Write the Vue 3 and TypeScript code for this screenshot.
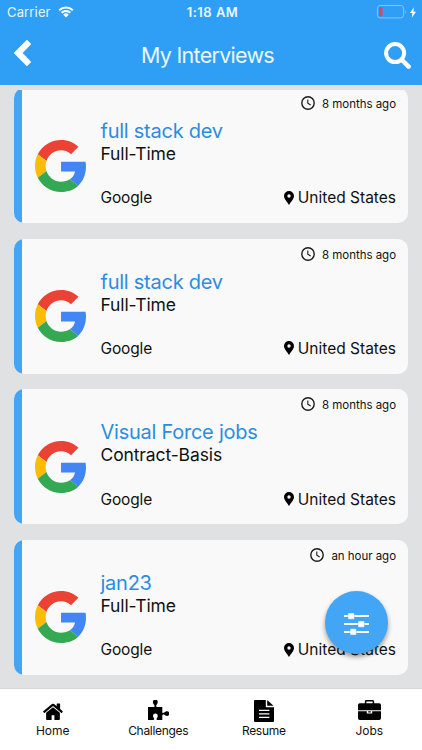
<script setup lang="ts">
interface Interview {
  id: number
  title: string
  type: string
  company: string
  location: string
  ago: string
}

const interviews: Interview[] = [
  { id: 1, title: 'full stack dev', type: 'Full-Time', company: 'Google', location: 'United States', ago: '8 months ago' },
  { id: 2, title: 'full stack dev', type: 'Full-Time', company: 'Google', location: 'United States', ago: '8 months ago' },
  { id: 3, title: 'Visual Force jobs', type: 'Contract-Basis', company: 'Google', location: 'United States', ago: '8 months ago' },
  { id: 4, title: 'jan23', type: 'Full-Time', company: 'Google', location: 'United States', ago: 'an hour ago' },
]
</script>

<template>
  <div class="screen">
    <header class="header">
      <div class="status">
        <div class="carrier">
          <span class="carrier-name">Carrier</span>
          <svg class="wifi" viewBox="0 0 16 12">
            <path d="M1.2 4.2A9.8 9.8 0 0 1 14.8 4.2M3.6 6.7A6.3 6.3 0 0 1 12.4 6.7" fill="none" stroke="#fff" stroke-width="2" />
            <path d="M8 11.6 5.2 8.7a4 4 0 0 1 5.6 0z" fill="#fff" />
          </svg>
        </div>
        <span class="time">1:18 AM</span>
        <div class="power">
          <svg class="battery" viewBox="0 0 30 14">
            <rect x=".5" y=".5" width="26" height="12.4" rx="2.6" fill="none" stroke="#84c6fb" />
            <rect x="2" y="2.2" width="3.6" height="9" rx=".8" fill="#c4506f" />
            <path d="M28 4.6q1.6 2 0 4.4z" fill="#84c6fb" />
          </svg>
          <svg class="bolt" viewBox="0 0 7 12"><path d="M4.5 0 0 6.6h2.8L2 12l5-7H4z" fill="#fff" /></svg>
        </div>
      </div>
      <div class="nav">
        <svg class="back" viewBox="0 0 17 26"><path d="M12.9 0 17 4.1 8.3 13l8.700 8.900-4.100 4.100L0 13z" fill="#fff" stroke="#fff" stroke-width=".6" /></svg>
        <h1 class="heading">My Interviews</h1>
        <svg class="search" viewBox="0 0 27 27">
          <circle cx="11.1" cy="11.1" r="9" fill="none" stroke="#fff" stroke-width="4" />
          <path d="m18 18 6.6 6.6" stroke="#fff" stroke-width="4.5" stroke-linecap="round" />
        </svg>
      </div>
    </header>

    <main class="list">
      <article v-for="item in interviews" :key="item.id" class="card">
        <div class="accent"></div>
        <div class="logo">
          <svg viewBox="0 0 47 48" preserveAspectRatio="none">
            <path fill="#ea4335" d="M24 9.5c3.54 0 6.71 1.22 9.21 3.6l6.85-6.85C35.9 2.38 30.47 0 24 0 14.62 0 6.51 5.38 2.56 13.22l7.98 6.19C12.43 13.72 17.74 9.5 24 9.5z" />
            <path fill="#4285f4" d="M46.98 24.55c0-1.57-.15-3.09-.38-4.55H24v9.02h12.94c-.58 2.96-2.26 5.48-4.78 7.18l7.73 6c4.51-4.18 7.09-10.36 7.09-17.65z" />
            <path fill="#fbbc05" d="M10.53 28.59c-.48-1.45-.76-2.99-.76-4.59s.27-3.14.76-4.59l-7.98-6.19C.92 16.46 0 20.12 0 24c0 3.88.92 7.54 2.56 10.78l7.97-6.19z" />
            <path fill="#34a853" d="M24 48c6.48 0 11.93-2.13 15.89-5.81l-7.73-6c-2.15 1.45-4.92 2.3-8.16 2.3-6.26 0-11.57-4.22-13.47-9.91l-7.98 6.19C6.51 42.62 14.62 48 24 48z" />
          </svg>
        </div>
        <div class="body">
          <div class="ago">
            <svg class="clock" viewBox="0 0 14 14" fill="none" stroke="#1b1b1b" stroke-width="1.4">
              <circle cx="7" cy="7" r="6.2" />
              <path d="M6.8 3.4v3.9l2.9 1.7" stroke-width="1.1" />
            </svg>
            <span>{{ item.ago }}</span>
          </div>
          <div class="title">{{ item.title }}</div>
          <div class="type">{{ item.type }}</div>
          <div class="foot">
            <span class="company">{{ item.company }}</span>
            <span class="place">
              <svg class="pin" viewBox="0 0 10 14"><path fill-rule="evenodd" d="M5 0a5 5 0 0 1 5 5c0 3.200-3.400 6-5 9C3.400 11 0 8.200 0 5a5 5 0 0 1 5-5zm0 3.300a1.700 1.700 0 1 0 0 3.400 1.700 1.700 0 0 0 0-3.400z" /></svg>
              <span>{{ item.location }}</span>
            </span>
          </div>
        </div>
      </article>
    </main>

    <footer class="tabs">
      <div class="tab">
        <svg class="icon home" viewBox="150 250 1492 1290" preserveAspectRatio="none"><path d="M1408 992v480q0 26-19 45t-45 19h-344v-354h-208v354h-344q-26 0-45-19t-19-45v-480q0-1 .5-3t.5-3l511-420 511 420q1 2 1 6zm223-69l-62 74q-8 9-21 11h-3q-13 0-21-7l-628-520-628 520q-12 8-24 7-13-2-21-11l-62-74q-8-10-7-23.500t11-21.500l655-545q32-26 76-26t76 26l200 166v-171q0-14 9-23t23-9h192q14 0 23 9t9 23v384l175 146q10 8 11 21.500t-7 23.500z" /></svg>
        <span>Home</span>
      </div>
      <div class="tab">
        <svg class="icon puzzle" viewBox="0 0 21 20"><path d="M0 7h5.800c1.200 0 .9-1.100.4-2C5.600 4 4.700 3.300 4.900 2A2.400 2.400 0 0 1 9.700 2c.2 1.300-.7 2-1.200 3-.5.900-.5 2 .6 2H14.300v5c0 1.300 1.200 1 2 .5.800-.6 1.500-1.200 2.700-1.200a2.300 2.300 0 0 1 0 4.600c-1.200 0-1.900-.8-2.700-1.200-1-.5-2-.2-2 1V20H9.300c-.9 0-.9-1-.5-1.700.5-1 1-1.400 1-2.300a2.400 2.400 0 0 0-4.800 0c0 .9.500 1.300 1 2.300.4.800.2 1.700-.8 1.700H0z" /></svg>
        <span class="narrow">Challenges</span>
      </div>
      <div class="tab">
        <svg class="icon file" viewBox="0 0 20 22">
          <path d="M1 0h10.800v7.200H20V21a1 1 0 0 1-1 1H1a1 1 0 0 1-1-1V1a1 1 0 0 1 1-1zM13.200 0 19.500 5.800H13.200z" />
          <path d="M5 10.300h10.400M5 13.800h10.400M5 17.300h10.400" stroke="#fff" stroke-width="1.300" />
        </svg>
        <span class="narrow">Resume</span>
      </div>
      <div class="tab">
        <svg class="icon case" viewBox="0 0 23 20">
          <path d="M7.600 4V1.500a.7.700 0 0 1 .7-.7h6.400a.7.700 0 0 1 .7.700V4" fill="none" stroke="#000" stroke-width="1.500" />
          <path d="M1.800 3.300h19.400A1.800 1.800 0 0 1 23 5.100v5.200H0V5.100a1.800 1.800 0 0 1 1.800-1.800zM0 11.300h8.800v2.200h5.400v-2.200H23v6.900a1.800 1.800 0 0 1-1.800 1.800H1.800A1.800 1.800 0 0 1 0 18.200zM10.200 11.300h2.600v1.100h-2.600z" />
        </svg>
        <span>Jobs</span>
      </div>
    </footer>

    <button class="fab" aria-label="Filter">
      <svg viewBox="0 0 25 22">
        <path d="M0 3h25M0 11h25M0 19h25" stroke="#fff" stroke-width="2" />
        <g fill="#fff" stroke="#42a5f5" stroke-width=".4">
          <rect x="4" y="0" width="6.400" height="6.200" rx="1" />
          <rect x="14" y="8" width="6.400" height="6.200" rx="1" />
          <rect x="6" y="15.800" width="6.400" height="6.200" rx="1" />
        </g>
      </svg>
    </button>
  </div>
</template>

<style>
body {
  margin: 0;
}
</style>

<style scoped>
.screen {
  position: relative;
  display: flex;
  flex-direction: column;
  width: 422px;
  height: 750px;
  overflow: hidden;
  background: #dfe1e3;
  color: #111;
  font-family: Inter, 'Liberation Sans', sans-serif;
}
svg {
  display: block;
  flex: none;
}
.header {
  flex: none;
  height: 84.5px;
  background: #2f9ff6;
  color: #fff;
}
.status {
  display: grid;
  grid-template-columns: 1fr auto 1fr;
  align-items: center;
  height: 24px;
  padding: 0 6px 0 7px;
  font-size: 13px;
}
.carrier {
  display: flex;
  align-items: center;
  gap: 7px;
  color: #e9f5ff;
}
.carrier-name {
  letter-spacing: 0.15px;
}
.wifi {
  width: 16px;
  height: 12px;
}
.time {
  margin-left: 2px;
  font-weight: 600;
  letter-spacing: 0.5px;
  color: #e9f7ff;
}
.power {
  display: flex;
  justify-content: flex-end;
  align-items: center;
  gap: 3px;
}
.battery {
  width: 30px;
  height: 14px;
}
.bolt {
  width: 6px;
  height: 11px;
}
.nav {
  display: grid;
  grid-template-columns: 127px 1fr auto;
  align-items: center;
  height: 60px;
  padding: 0 11px 0 14px;
}
.back {
  width: 17px;
  height: 26px;
  margin-top: -3px;
}
.heading {
  margin: 1px 0 0;
  font-size: 21.5px;
  font-weight: 400;
  line-height: 28px;
  letter-spacing: -0.72px;
  white-space: nowrap;
  color: #eaf6ff;
}
.search {
  width: 27px;
  height: 27px;
  margin-top: 2px;
}
.list {
  flex: 1;
  min-height: 0;
  margin-top: 5.5px;
  padding: 0 14px;
  overflow: hidden;
}
.card {
  display: flex;
  height: 135px;
  margin-bottom: 15.6px;
  border-radius: 10px;
  overflow: hidden;
  background: #f9f9f9;
}
.card:first-child {
  margin-top: -1.8px;
}
.accent {
  flex: none;
  width: 8px;
  background: #42a5f5;
}
.logo {
  flex: none;
  width: 78.5px;
  padding: 51.4px 0 0 13px;
  box-sizing: border-box;
}
.logo svg {
  width: 51px;
  height: 52px;
}
.body {
  flex: 1;
  padding-right: 12px;
  white-space: nowrap;
}
.ago {
  display: flex;
  justify-content: flex-end;
  align-items: center;
  gap: 7px;
  height: 16px;
  margin-top: 8px;
  font-size: 11.5px;
  letter-spacing: -0.03px;
}
.clock {
  width: 14px;
  height: 14px;
  margin-top: -2px;
}
.title {
  margin-top: 7px;
  font-size: 20px;
  line-height: 24px;
  letter-spacing: -0.25px;
  color: #2b8de0;
}
.type {
  font-size: 17.5px;
  line-height: 22px;
  letter-spacing: -0.12px;
}
.foot {
  display: flex;
  justify-content: space-between;
  align-items: center;
  height: 20px;
  margin-top: 22.700px;
  font-size: 15.5px;
}
.company {
  letter-spacing: -0.15px;
}
.place {
  display: flex;
  align-items: center;
  gap: 4px;
}
.pin {
  width: 10px;
  height: 14px;
  fill: #000;
}
.tabs {
  flex: none;
  display: grid;
  grid-template-columns: repeat(4, 1fr);
  height: 61px;
  border-top: 1px solid #d7d8d9;
  background: #fff;
}
.tab {
  display: flex;
  flex-direction: column;
  align-items: center;
  justify-content: space-between;
  height: 39px;
  padding-top: 11px;
  font-size: 12px;
  line-height: 16px;
}
.narrow {
  letter-spacing: -0.3px;
}
.icon {
  fill: #000;
}
.home {
  width: 20px;
  height: 17px;
  margin-top: 3px;
}
.puzzle {
  width: 21px;
  height: 20px;
}
.file {
  width: 20px;
  height: 22px;
}
.case {
  width: 23px;
  height: 20px;
}
.fab {
  position: absolute;
  right: 34px;
  bottom: 96px;
  display: flex;
  align-items: center;
  justify-content: center;
  width: 63px;
  height: 63px;
  padding: 0;
  border: 0;
  border-radius: 50%;
  background: #42a5f5;
  box-shadow: 0 3px 5px rgba(0, 0, 0, 0.4);
}
.fab svg {
  width: 25px;
  height: 22px;
  margin-top: 3px;
}
</style>
